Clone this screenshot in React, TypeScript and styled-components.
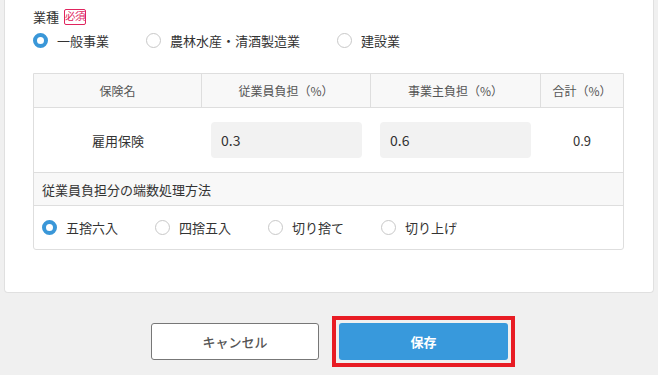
import React from "react";
import styled, { createGlobalStyle } from "styled-components";

const Global = createGlobalStyle`
  html, body { margin: 0; padding: 0; background: #f0f0f0; }
  body {
    font-family: "Noto Sans CJK JP", "Noto Sans", sans-serif;
    color: #333;
    -webkit-font-smoothing: antialiased;
  }
  * { box-sizing: border-box; }
`;

const Page = styled.div`
  width: 658px;
  height: 375px;
  overflow: hidden;
  padding: 0 4px;
`;

const Card = styled.div`
  width: 650px;
  background: #fff;
  border: 1px solid #e0e0e0;
  border-top: none;
  border-radius: 0 0 4px 4px;
  padding: 8px 29px 42px 28px;
`;

const LabelRow = styled.div`
  display: flex;
  align-items: center;
  gap: 5px;
  height: 17px;
  font-size: 13px;
  line-height: 17px;
`;

const Badge = styled.span`
  display: inline-flex;
  align-items: center;
  justify-content: center;
  width: 22px;
  height: 16px;
  border: 1px solid #e0245e;
  border-radius: 2px;
  color: #e0245e;
  font-size: 10.5px;
  line-height: 1;
  letter-spacing: -0.5px;
`;

const RadioGroup = styled.div<{ $pad?: number; $h: number; $mt?: number }>`
  display: flex;
  align-items: center;
  height: ${(p) => p.$h}px;
  margin-top: ${(p) => p.$mt ?? 0}px;
  padding-left: ${(p) => p.$pad ?? 0}px;
`;

const RadioItem = styled.label`
  display: flex;
  align-items: center;
  gap: 9px;
  margin-right: 37px;
  font-size: 13px;
  color: #333;
`;

const Circle = styled.span<{ $on?: boolean }>`
  width: 15px;
  height: 15px;
  border-radius: 50%;
  background: #fff;
  border: ${(p) => (p.$on ? "4.5px solid #3a97d8" : "1px solid #c8c8c8")};
  flex: none;
`;

const Table = styled.div`
  margin-top: 25px;
  width: 591px;
  border: 1px solid #dedede;
  border-radius: 0 0 3px 3px;
  display: grid;
  grid-template-columns: 168px 169px 170px 1fr;
`;

const HeadCell = styled.div<{ $last?: boolean }>`
  height: 34px;
  background: #f8f8f8;
  border-bottom: 1px solid #dedede;
  border-right: ${(p) => (p.$last ? "none" : "1px solid #dedede")};
  display: flex;
  align-items: center;
  justify-content: center;
  font-size: 12px;
  color: #555;
`;

const BodyCell = styled.div<{ $align?: string }>`
  height: 65px;
  border-bottom: 1px solid #dedede;
  display: flex;
  align-items: center;
  justify-content: ${(p) => p.$align ?? "center"};
  padding: 0 9px;
  font-size: 13px;
  color: #333;
`;

const Input = styled.div`
  width: 151px;
  height: 36px;
  background: #f2f2f2;
  border-radius: 4px;
  display: flex;
  align-items: center;
  padding-left: 10px;
  font-size: 14px;
  color: #333;
`;

const SectionHead = styled.div`
  grid-column: 1 / -1;
  height: 33px;
  background: #f8f8f8;
  border-bottom: 1px solid #dedede;
  display: flex;
  align-items: center;
  padding-left: 8px;
  font-size: 13px;
  color: #333;
`;

const SectionBody = styled.div`
  grid-column: 1 / -1;
`;

const Buttons = styled.div`
  display: flex;
  justify-content: center;
  gap: 20px;
  margin-top: 30px;
  padding-left: 1px;
`;

const CancelButton = styled.button`
  width: 168px;
  height: 37px;
  background: #fff;
  border: 1px solid #777;
  border-radius: 3px;
  font-family: inherit;
  font-size: 13px;
  font-weight: 500;
  color: #555;
`;

const Highlight = styled.div`
  position: relative;
  &::after {
    content: "";
    position: absolute;
    inset: -7px;
    border: 4px solid #e81c24;
    pointer-events: none;
  }
`;

const SaveButton = styled.button`
  display: block;
  width: 169px;
  height: 37px;
  background: #3899dc;
  border: none;
  border-radius: 3px;
  font-family: inherit;
  font-size: 13px;
  font-weight: 700;
  color: #fff;
`;

const Radio = ({ label, on }: { label: string; on?: boolean }) => (
  <RadioItem>
    <Circle $on={on} />
    <span>{label}</span>
  </RadioItem>
);

export default function App() {
  return (
    <Page>
      <Global />
      <Card>
        <LabelRow>
          <span>業種</span>
          <Badge>必須</Badge>
        </LabelRow>
        <RadioGroup $h={16} $mt={7}>
          <Radio label="一般事業" on />
          <Radio label="農林水産・清酒製造業" />
          <Radio label="建設業" />
        </RadioGroup>
        <Table>
          <HeadCell>保険名</HeadCell>
          <HeadCell>従業員負担（%）</HeadCell>
          <HeadCell>事業主負担（%）</HeadCell>
          <HeadCell $last>合計（%）</HeadCell>
          <BodyCell>雇用保険</BodyCell>
          <BodyCell $align="flex-start">
            <Input>0.3</Input>
          </BodyCell>
          <BodyCell $align="flex-start">
            <Input>0.6</Input>
          </BodyCell>
          <BodyCell>0.9</BodyCell>
          <SectionHead>従業員負担分の端数処理方法</SectionHead>
          <SectionBody>
            <RadioGroup $h={43} $pad={8}>
              <Radio label="五捨六入" on />
              <Radio label="四捨五入" />
              <Radio label="切り捨て" />
              <Radio label="切り上げ" />
            </RadioGroup>
          </SectionBody>
        </Table>
      </Card>
      <Buttons>
        <CancelButton>キャンセル</CancelButton>
        <Highlight>
          <SaveButton>保存</SaveButton>
        </Highlight>
      </Buttons>
    </Page>
  );
}
